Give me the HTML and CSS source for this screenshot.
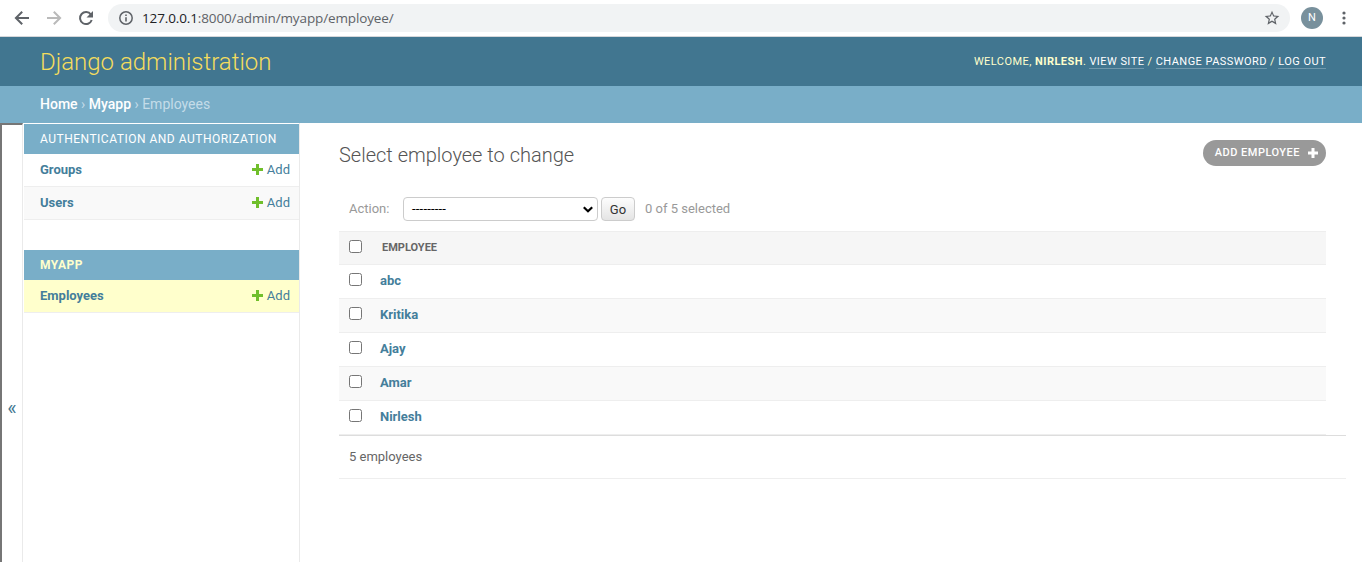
FILE: index.html
```html
<!DOCTYPE html>
<html lang="en">
<head>
<meta charset="utf-8">
<title>Select employee to change | Django site admin</title>
<link rel="stylesheet" href="styles.css">
</head>
<body>
<div class="toolbar">
  <svg class="nav-icon" width="16" height="16" viewBox="0 0 16 16" fill="none" stroke="#5f6368" stroke-width="2"><path d="M15 8H2M8.2 1.7 1.9 8l6.3 6.3"/></svg>
  <svg class="nav-icon" width="16" height="16" viewBox="0 0 16 16" fill="none" stroke="#bababa" stroke-width="2"><path d="M1 8h13M7.8 1.7 14.1 8l-6.3 6.3"/></svg>
  <svg class="nav-icon" width="16" height="16" viewBox="0 0 16 16"><path d="M12.9 4.6A6 6 0 1 0 13.7 10" fill="none" stroke="#5f6368" stroke-width="2"/><path d="M15 1v6.500H8.500z" fill="#5f6368"/></svg>
  <div class="omnibox">
    <svg width="14" height="14" viewBox="0 0 14 14"><circle cx="7" cy="7" r="6.200" fill="none" stroke="#5f6368" stroke-width="1.500"/><path d="M6.200 6.200h1.600v4.300H6.200zM6.200 3.500h1.600v1.600H6.200z" fill="#5f6368"/></svg>
    <span class="url"><span class="host">127.0.0.1</span>:8000/admin/myapp/employee/</span>
    <svg class="star" width="16" height="16" viewBox="0 0 24 24" fill="#5f6368"><path d="M23 9.040l-7.910-.68L12 1 8.910 8.370 1 9.040l6 5.210L5.200 22 12 17.890 18.800 22 17 14.250zM12 15.600l-4.100 2.480 1.090-4.680-3.620-3.140 4.780-.41L12 5.400l1.860 4.460 4.780.41-3.620 3.140 1.090 4.680z"/></svg>
  </div>
  <span class="avatar">N</span>
  <svg width="4" height="14" viewBox="0 0 4 14" fill="#5f6368"><circle cx="2" cy="2" r="1.600"/><circle cx="2" cy="7" r="1.600"/><circle cx="2" cy="12" r="1.600"/></svg>
</div>
<header class="header">
  <h1 class="site-name">Django administration</h1>
  <div class="user-tools">Welcome, <strong>Nirlesh</strong>. <a class="tool">View site</a> / <a class="tool">Change password</a> / <a class="tool">Log out</a></div>
</header>
<div class="breadcrumbs"><a class="crumb">Home</a> › <a class="crumb">Myapp</a> › Employees</div>
<div class="main">
  <div class="toggle">«</div>
  <nav class="sidebar">
    <section class="module">
      <h2 class="caption">Authentication and Authorization</h2>
      <div class="model"><b>Groups</b><span class="add"><svg width="11" height="11" viewBox="0 0 11 11"><path d="M4 0h3v4h4v3H7v4H4V7H0V4h4z"/></svg>Add</span></div>
      <div class="model alt"><b>Users</b><span class="add"><svg width="11" height="11" viewBox="0 0 11 11"><path d="M4 0h3v4h4v3H7v4H4V7H0V4h4z"/></svg>Add</span></div>
    </section>
    <section class="module">
      <h2 class="caption current">Myapp</h2>
      <div class="model selected"><b>Employees</b><span class="add"><svg width="11" height="11" viewBox="0 0 11 11"><path d="M4 0h3v4h4v3H7v4H4V7H0V4h4z"/></svg>Add</span></div>
    </section>
  </nav>
  <main class="content">
    <div class="title-row">
      <h2 class="title">Select employee to change</h2>
      <a class="add-button">Add employee<svg width="10" height="10" viewBox="0 0 10 10"><path d="M3.500 0h3v3.500H10v3H6.500V10h-3V6.500H0v-3h3.500z"/></svg></a>
    </div>
    <div class="actions">
      <span class="action-label">Action:</span>
      <div class="select"><span class="dashes">---------</span><svg width="10" height="7" viewBox="0 0 10 7" fill="none" stroke="#000" stroke-width="2.200"><path d="M.8 1.200 5 5.200l4.200-4"/></svg></div>
      <button class="go">Go</button>
      <span>0 of 5 selected</span>
    </div>
    <div class="results">
      <div class="row head"><i class="check"></i><span>Employee</span></div>
      <div class="row"><i class="check"></i><b>abc</b></div>
      <div class="row alt"><i class="check"></i><b>Kritika</b></div>
      <div class="row"><i class="check"></i><b>Ajay</b></div>
      <div class="row alt"><i class="check"></i><b>Amar</b></div>
      <div class="row"><i class="check"></i><b>Nirlesh</b></div>
    </div>
    <div class="paginator">5 employees</div>
  </main>
</div>
</body>
</html>
```
FILE: styles.css
```css
* { box-sizing: border-box; }
body { margin: 0; height: 562px; overflow: hidden; display: flex; flex-direction: column; background: #fff; color: #333; font: 13px/16px Roboto, sans-serif; }
h1, h2 { margin: 0; font-weight: 400; }

.toolbar { height: 37px; flex: none; display: flex; align-items: center; padding: 0 16px 1px 14px; border-bottom: 1px solid #d5d7da; }
.nav-icon { margin-right: 16px; flex: none; }
.omnibox { flex: 1; height: 28px; margin-left: -2px; border-radius: 14px; background: #f1f3f4; display: flex; align-items: center; padding: 0 10px 0 11px; }
.url { margin-left: 9px; font: 13.5px/20px "Open Sans", sans-serif; letter-spacing: -0.13px; color: #5f6368; }
.host { color: #202124; }
.star { margin-left: auto; }
.avatar { width: 22px; height: 22px; margin: 0 19px 0 11px; border-radius: 50%; background: #78909c; color: #fff; font-size: 11px; line-height: 22px; text-align: center; }

.header { height: 49px; flex: none; display: flex; align-items: center; justify-content: space-between; padding: 0 36px 0 40px; background: #417690; color: #ffc; }
.site-name { font-size: 24px; line-height: 28px; font-weight: 300; color: #f5dd5d; }
.user-tools { font-size: 11px; font-weight: 400; letter-spacing: 0.45px; text-transform: uppercase; }
.tool { color: #fff; border-bottom: 1px solid rgba(255, 255, 255, 0.25); }
.breadcrumbs { height: 37px; flex: none; padding: 10px 40px; background: #79aec8; color: #c4dce8; font-size: 14px; }
.crumb { color: #fff; font-weight: 500; }

.main { flex: 1; display: flex; min-height: 0; }
.toggle { width: 23px; display: flex; align-items: center; justify-content: center; padding: 128px 0 0; border-top: 2px solid #767676; border-left: 2px solid #767676; border-right: 1px solid #eaeaea; color: #417690; font-size: 20px; }
.sidebar { width: 277px; padding: 1px 0 0 1px; border-right: 1px solid #eaeaea; }
.module { margin-bottom: 30px; }
.caption { height: 30px; padding: 7px 16px; background: #79aec8; color: #fff; font-size: 12px; line-height: 16px; letter-spacing: 0.5px; text-transform: uppercase; }
.current { color: #ffc; font-weight: 700; }
.model { height: 33px; display: flex; align-items: center; justify-content: space-between; padding: 0 9px 0 16px; border-bottom: 1px solid #eee; color: #447e9b; }
.alt { background: #f9f9f9; }
.selected { background: #ffc; }
.add { display: flex; align-items: center; gap: 4px; }
.add svg { fill: #70bf2b; margin-bottom: 1px; }

.content { flex: 1; padding: 17px 36px 0 39px; }
.title-row { display: flex; justify-content: space-between; height: 49px; }
.title { padding-top: 3px; font-size: 20px; line-height: 24px; font-weight: 300; color: #555; }
.add-button { height: 26px; display: flex; align-items: center; gap: 8px; padding: 0 8px 0 12px; border-radius: 13px; background: #999; color: #fff; font-size: 11px; font-weight: 500; letter-spacing: 0.5px; text-transform: uppercase; }
.add-button svg { fill: #fff; }
.actions { height: 42px; display: flex; align-items: center; padding: 0 10px 2px; color: #999; }
.action-label { width: 54px; }
.select { width: 195px; height: 24px; display: flex; align-items: center; justify-content: space-between; padding: 0 4px 0 8px; border: 1px solid #ccc; border-radius: 4px; color: #000; }
.dashes { letter-spacing: 0.2px; }
.go { width: 34px; height: 24px; margin: 0 10px 0 3px; padding: 1px 0 0; border: 1px solid #ccc; border-radius: 4px; background: linear-gradient(#fdfdfd, #e4e4e4); color: #333; font: 13px Roboto, sans-serif; }
.row { height: 34px; display: flex; align-items: center; padding: 0 10px 2px; gap: 18px; border-bottom: 1px solid #eee; color: #447e9b; }
.check { width: 13px; height: 13px; margin-top: -3px; border: 1px solid #767676; border-radius: 2.5px; background: #fff; }
.head { gap: 20px; padding-bottom: 0; border-top: 1px solid #eee; background: #f6f6f6; color: #666; font-size: 11px; font-weight: 700; text-transform: uppercase; }
.paginator { height: 44px; margin-right: -20px; padding: 13px 10px; border-top: 1px solid #ddd; border-bottom: 1px solid #eee; color: #666; }
```
